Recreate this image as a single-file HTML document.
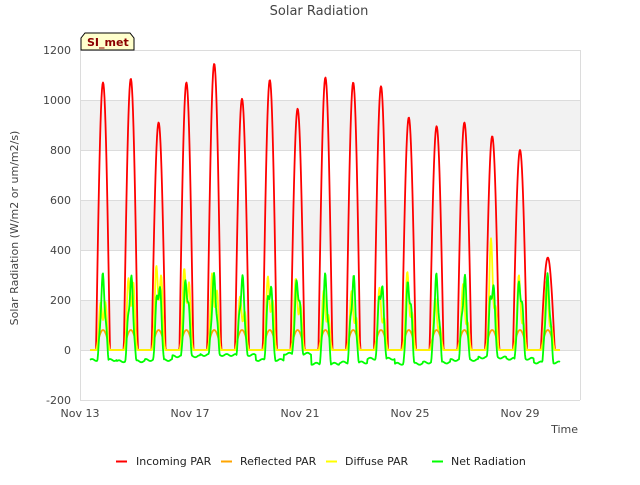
<!DOCTYPE html>
<html><head><meta charset="utf-8"><style>
body{margin:0;background:#fff;font-family:"Liberation Sans","DejaVu Sans",sans-serif;}
svg text{font-family:"DejaVu Sans","Liberation Sans",sans-serif;}
</style></head><body>
<svg id="s" width="640" height="480" xmlns="http://www.w3.org/2000/svg">
<rect width="640" height="480" fill="#fff"/>
<rect x="80" y="100" width="500" height="50" fill="#f2f2f2"/>
<rect x="80" y="200" width="500" height="50" fill="#f2f2f2"/>
<rect x="80" y="300" width="500" height="50" fill="#f2f2f2"/>
<g stroke="#dcdcdc" stroke-width="1">
<line x1="80" y1="50.5" x2="580" y2="50.5"/><line x1="80" y1="100.5" x2="580" y2="100.5"/>
<line x1="80" y1="150.5" x2="580" y2="150.5"/><line x1="80" y1="200.5" x2="580" y2="200.5"/>
<line x1="80" y1="250.5" x2="580" y2="250.5"/><line x1="80" y1="300.5" x2="580" y2="300.5"/>
<line x1="80" y1="350.5" x2="580" y2="350.5"/>
<line x1="80.5" y1="50" x2="80.5" y2="400"/><line x1="580.5" y1="50" x2="580.5" y2="400"/>
<line x1="80" y1="400.5" x2="580" y2="400.5"/>
</g>
<g font-size="11" fill="#444" text-anchor="end">
<text x="71" y="54">1200</text><text x="71" y="104">1000</text><text x="71" y="154">800</text>
<text x="71" y="204">600</text><text x="71" y="254">400</text><text x="71" y="304">200</text>
<text x="71" y="354">0</text><text x="71" y="404">-200</text>
</g>
<g font-size="11" fill="#444" text-anchor="middle">
<text x="80" y="417">Nov 13</text><text x="190" y="417">Nov 17</text><text x="300" y="417">Nov 21</text>
<text x="410" y="417">Nov 25</text><text x="520" y="417">Nov 29</text>
</g>
<text x="578" y="433" font-size="11" fill="#444" text-anchor="end">Time</text>
<text x="319" y="15" font-size="13" fill="#444" text-anchor="middle">Solar Radiation</text>
<text transform="translate(18,228) rotate(-90)" font-size="11" fill="#444" text-anchor="middle">Solar Radiation (W/m2 or um/m2/s)</text>
<g id="lines" fill="none" stroke-width="2" stroke-linejoin="round"></g>
<path d="M81 50 L81 38 L85 33 L130 33 L134 38 L134 50 Z" fill="#ffffcc" stroke="#000" stroke-width="1"/>
<text x="87" y="46" font-size="11" font-weight="bold" fill="#8b0000">SI_met</text>
<g font-size="11" fill="#222">
<line x1="116" y1="461.5" x2="127" y2="461.5" stroke="#f00" stroke-width="2"/><text x="136" y="465">Incoming PAR</text>
<line x1="221" y1="461.5" x2="232" y2="461.5" stroke="#ffa500" stroke-width="2"/><text x="240" y="465">Reflected PAR</text>
<line x1="326" y1="461.5" x2="337" y2="461.5" stroke="#ff0" stroke-width="2"/><text x="345" y="465">Diffuse PAR</text>
<line x1="432" y1="461.5" x2="443" y2="461.5" stroke="#0f0" stroke-width="2"/><text x="451" y="465">Net Radiation</text>
</g>
</svg>
<script>
var pk=[1070,1085,910,1070,1145,1005,1080,965,1090,1070,1055,930,895,910,855,800,370];
var df=[300,440,500,470,430,290,390,370,300,290,300,370,240,300,500,330,300];
var nt=[-40,-45,-40,-25,-20,-20,-40,-15,-55,-50,-35,-55,-50,-40,-30,-35,-50];
function Y(v){return 350-v*0.25;}
function mk(f){var d="";for(var x=90;x<=560;x+=0.5){var t=(x-103)/27.8,k=Math.round(t),fr=t-k;if(k<0)k=0;if(k>16)k=16;var v=f(k,fr,x);d+=(d?"L":"M")+x.toFixed(1)+" "+Y(v).toFixed(1);}return d;}
function bell(fr,w){var a=Math.abs(fr)/w;return a<1?Math.cos(a*Math.PI/2):0;}
var g=document.getElementById("lines");
function add(d,c){var p=document.createElementNS("http://www.w3.org/2000/svg","path");p.setAttribute("d",d);p.setAttribute("stroke",c);p.setAttribute("stroke-width","1.8");g.appendChild(p);}
add(mk(function(k,fr){return pk[k]*bell(fr,0.25);}),"#f00");
add(mk(function(k,fr){return 80*bell(fr,0.25);}),"#ffa500");
add(mk(function(k,fr,x){var b=bell(fr,0.25);return df[k]*Math.pow(b,2)*(0.7+0.3*Math.sin(x*0.9));}),"#ff0");
add(mk(function(k,fr,x){var b=bell(fr,0.2);return b>0?nt[k]+(310-nt[k])*Math.pow(b,1.5)*(0.85+0.15*Math.sin(x*1.3)):nt[k]+4*Math.sin(x*0.7);}),"#0f0");
</script>
</body></html>
